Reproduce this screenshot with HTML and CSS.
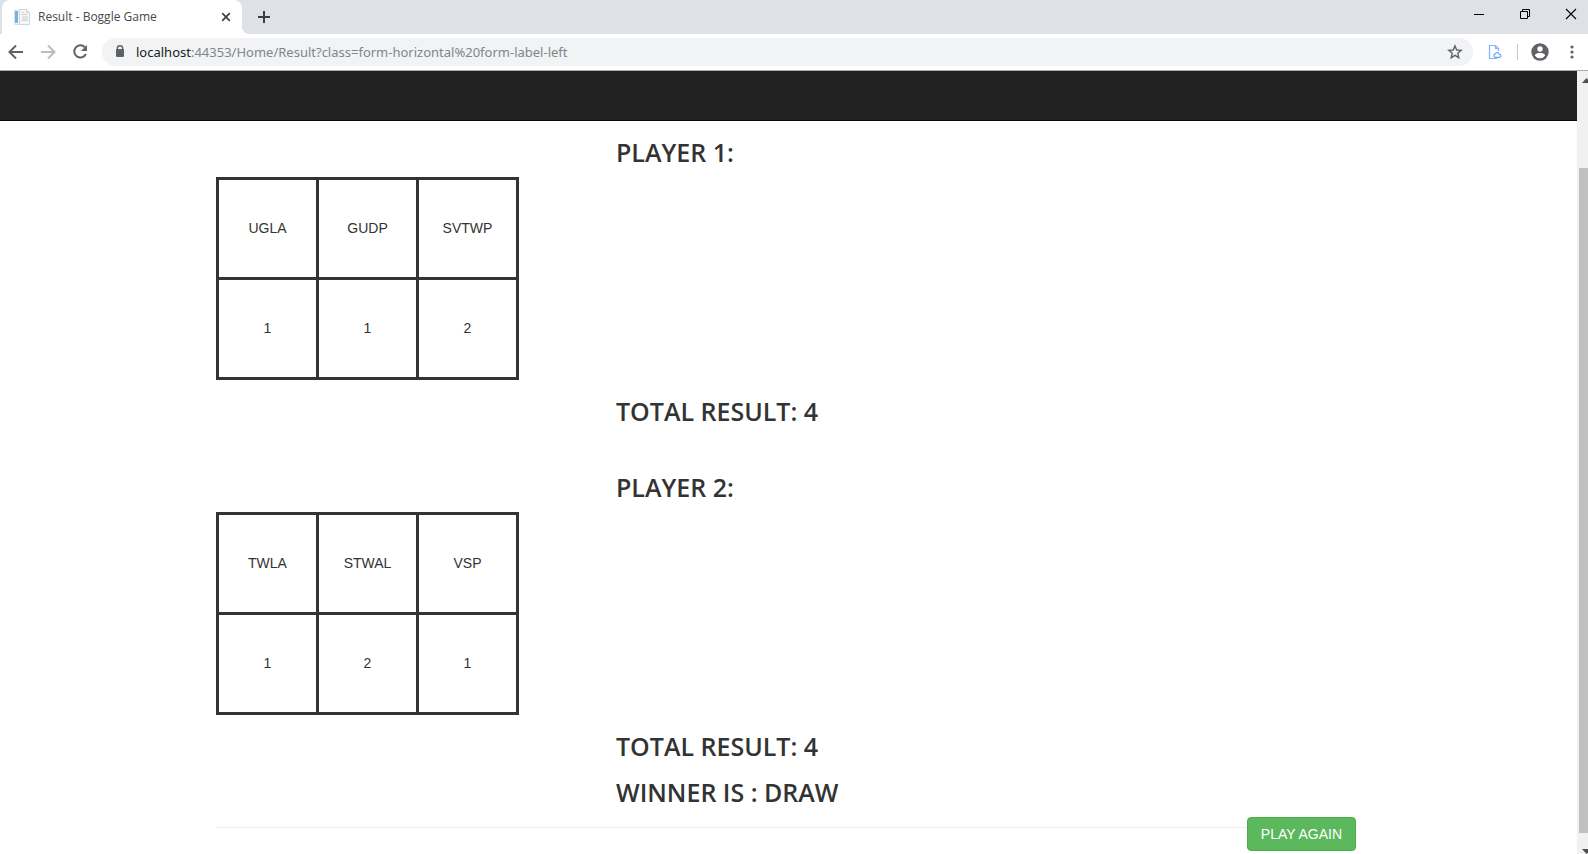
FILE: index.html
```html
<!DOCTYPE html>
<html lang="en">
<head>
<meta charset="utf-8">
<meta name="viewport" content="width=device-width, initial-scale=1">
<title>Result - Boggle Game</title>
<link rel="stylesheet" href="styles.css">
</head>
<body class="window">
<header class="browser">
  <div class="tabstrip">
    <div class="tab">
      <svg class="favicon" width="16" height="16" viewBox="0 0 16 16" aria-hidden="true">
        <path d="M0.5 1h10v14.500h-10z" fill="#f4f6f8" stroke="#dbe1e6"/>
        <path d="M1 2h3v12H1z" fill="#74b4dc"/>
        <path d="M5.500 0.500h7l3 3v12h-10z" fill="#f6f7f8" stroke="#d2d6da"/>
        <path d="M12.500 0.500v3h3M7.500 3.500h3M7.500 5.500h6M7.500 11.500h6" fill="none" stroke="#cfd4d9"/>
        <path d="M8 7h6v4H8z" fill="#dfe3e7"/>
      </svg>
      <span class="tab-title">Result - Boggle Game</span>
      <button class="tab-close" type="button" aria-label="Close tab">
        <svg width="16" height="16" viewBox="0 0 16 16"><path d="M4.200 4.200l7.600 7.600M11.800 4.200l-7.600 7.600" fill="none" stroke="#3c4043" stroke-width="1.700"/></svg>
      </button>
    </div>
    <button class="new-tab" type="button" aria-label="New tab">
      <svg width="16" height="16" viewBox="0 0 16 16"><path d="M8 2v12M2 8h12" fill="none" stroke="#3c4043" stroke-width="2"/></svg>
    </button>
    <div class="window-controls">
      <button class="window-button" type="button" aria-label="Minimize"><svg width="12" height="12" viewBox="0 0 12 12"><path d="M1 6.500h10" stroke="#000"/></svg></button>
      <button class="window-button" type="button" aria-label="Restore"><svg width="12" height="12" viewBox="0 0 12 12"><path d="M1.500 3.500h7v7h-7zM3.500 3V1.500h7v7H9" fill="none" stroke="#000"/></svg></button>
      <button class="window-button" type="button" aria-label="Close"><svg width="12" height="12" viewBox="0 0 12 12"><path d="M1 1l10 10M11 1L1 11" fill="none" stroke="#000" stroke-width="1.100"/></svg></button>
    </div>
  </div>
  <div class="toolbar">
    <button class="tool" type="button" aria-label="Back"><svg width="16" height="16" viewBox="0 0 16 16"><path d="M15 8H2.500M8 1.500L1.500 8L8 14.500" fill="none" stroke="#5f6368" stroke-width="2"/></svg></button>
    <button class="tool" type="button" aria-label="Forward"><svg width="16" height="16" viewBox="0 0 16 16"><path d="M1 8h12.500M8 1.500L14.500 8L8 14.500" fill="none" stroke="#babcbe" stroke-width="2"/></svg></button>
    <button class="tool" type="button" aria-label="Reload"><svg width="16" height="16" viewBox="0 0 16 16"><path d="M12.800 3.300A6.100 6.100 0 1 0 13.900 10" fill="none" stroke="#5f6368" stroke-width="2"/><path d="M15 1v6H9z" fill="#5f6368"/></svg></button>
    <div class="omnibox">
      <svg width="12" height="16" viewBox="0 0 12 16" aria-hidden="true"><path d="M3.300 7V4.500a2.700 2.700 0 0 1 5.400 0V7" fill="none" stroke="#5f6368" stroke-width="1.400"/><rect x="2" y="5" width="8" height="8" rx="1" fill="#5f6368"/></svg>
      <div class="address" role="textbox" contenteditable="true" spellcheck="false" aria-label="Address"><span class="host">localhost</span>:44353/Home/Result?class=form-horizontal%20form-label-left</div>
      <button class="star" type="button" aria-label="Bookmark this page"><svg width="16" height="16" viewBox="0 0 16 16"><path d="M8 1.900l1.700 4.100 4.500.4-3.400 2.900 1 4.400L8 11.400l-3.800 2.300 1-4.400-3.400-2.900 4.500-.4z" fill="none" stroke="#5f6368" stroke-width="1.400"/></svg></button>
    </div>
    <button class="extension" type="button" aria-label="Document extension"><svg width="14" height="16" viewBox="0 0 14 16"><path d="M9 14.500H1.500v-13H7.500l3 3V7M7.500 1.500v3h3" fill="none" stroke="#7db4fb" stroke-width="1.200"/><path d="M7 13.300a1.800 1.800 0 0 1 .2-3.400 2.200 2.200 0 0 1 4.100.2 1.700 1.700 0 0 1 .7 3.200z" fill="#fff" stroke="#66a6fa" stroke-width="1.200"/></svg></button>
    <span class="separator"></span>
    <button class="profile" type="button" aria-label="Profile"><svg width="18" height="18" viewBox="0 0 18 18"><circle cx="9" cy="9" r="8.700" fill="#5f6368"/><circle cx="9" cy="6" r="2.700" fill="#fff"/><path d="M3.800 12.400C4.200 10.600 7 10 9 10s4.800.6 5.200 2.400A6.200 6.200 0 0 1 9 15.200a6.200 6.200 0 0 1-5.200-2.800z" fill="#fff"/></svg></button>
    <button class="menu" type="button" aria-label="Menu"><svg width="4" height="14" viewBox="0 0 4 14"><circle cx="2" cy="2" r="1.600" fill="#5f6368"/><circle cx="2" cy="7" r="1.600" fill="#5f6368"/><circle cx="2" cy="12" r="1.600" fill="#5f6368"/></svg></button>
  </div>
</header>
<div class="viewport">
  <div class="page">
    <nav class="navbar" aria-label="Main"></nav>
    <main class="container">
      <section class="player">
        <h3 class="heading">PLAYER 1:</h3>
        <table class="words">
          <tr><td>UGLA</td><td>GUDP</td><td>SVTWP</td></tr>
          <tr><td>1</td><td>1</td><td>2</td></tr>
        </table>
        <h3 class="heading">TOTAL RESULT: 4</h3>
      </section>
      <section class="player">
        <h3 class="heading">PLAYER 2:</h3>
        <table class="words">
          <tr><td>TWLA</td><td>STWAL</td><td>VSP</td></tr>
          <tr><td>1</td><td>2</td><td>1</td></tr>
        </table>
        <h3 class="heading">TOTAL RESULT: 4</h3>
        <h3 class="heading">WINNER IS : DRAW</h3>
      </section>
      <div class="actions">
        <hr class="rule">
        <button class="play" type="button">PLAY AGAIN</button>
      </div>
    </main>
  </div>
  <div class="scrollbar" aria-hidden="true">
    <svg class="arrow" width="9" height="5" viewBox="0 0 9 5"><path d="M0 5L4.500 0L9 5z" fill="#505050"/></svg>
    <div class="track"><div class="thumb"></div></div>
    <svg class="arrow" width="9" height="5" viewBox="0 0 9 5"><path d="M0 0L4.500 5L9 0z" fill="#505050"/></svg>
  </div>
</div>
</body>
</html>
```

FILE: styles.css
```css
* {
  box-sizing: border-box;
}

.window {
  display: flex;
  flex-direction: column;
  min-height: 100vh;
  margin: 0;
  overflow: hidden;
  background: #fff;
  color: #333;
  font: 14px/20px "Liberation Sans", Arial, sans-serif;
}

button {
  display: flex;
  align-items: center;
  justify-content: center;
  padding: 0;
  border: 0;
  background: none;
}

svg {
  display: block;
  flex: none;
}

/* Browser chrome */
.browser {
  border-bottom: 1px solid #a9ada9;
  font-family: "Open Sans", "Noto Sans", sans-serif;
}

.tabstrip {
  display: flex;
  height: 34px;
  padding-left: 2px;
  background: #dee1e6;
}

.tab {
  position: relative;
  display: flex;
  align-items: center;
  gap: 8px;
  width: 240px;
  padding: 0 8px 0 12px;
  border-radius: 8px 8px 0 0;
  background: #fff;
}

.tab::after {
  content: "";
  position: absolute;
  bottom: 0;
  left: 100%;
  width: 8px;
  height: 8px;
  background: radial-gradient(circle at 100% 0, transparent 8px, #fff 8px);
}

.tab-title {
  flex: 1;
  color: #45494d;
  font-size: 12px;
  white-space: nowrap;
}

.new-tab {
  width: 28px;
  margin-left: 8px;
}

.window-controls {
  display: flex;
  height: 28px;
  margin-left: auto;
}

.window-button {
  width: 46px;
}

.window-button:last-child {
  width: 40px;
  padding-left: 6px;
}

.toolbar {
  display: flex;
  align-items: center;
  height: 36px;
  padding: 0 14px 0 0;
}

.tool {
  width: 32px;
  height: 32px;
}

.omnibox {
  display: flex;
  flex: 1;
  align-items: center;
  gap: 10px;
  height: 28px;
  margin-left: 6px;
  padding: 0 10px 0 12px;
  border-radius: 14px;
  background: #f1f3f4;
}

.address {
  flex: 1;
  color: #80868b;
  font-family: "Noto Sans", "Open Sans", sans-serif;
  font-size: 13px;
  white-space: nowrap;
}

.host {
  color: #202124;
}

.extension {
  margin-left: 15px;
}

.separator {
  width: 1px;
  height: 16px;
  margin: 0 13px 0 15px;
  background: #c6c8ca;
}

.menu {
  margin-left: 21px;
}

/* Web page */
.viewport {
  display: flex;
  flex: 1;
}

.page {
  flex: 1;
}

.navbar {
  height: 50px;
  border-bottom: 1px solid #080808;
  background: #222;
}

.container {
  max-width: 1145px;
  margin: 0 auto;
  padding-right: 5px;
}

.player {
  display: flow-root;
}

.player + .player {
  margin-top: 20px;
}

.heading {
  margin: 20px 0 14px 400px;
  font: 600 25px/22px "Open Sans", "Noto Sans", sans-serif;
  font-kerning: none;
}

.heading + .heading {
  margin-top: 24px;
}

.words {
  border-collapse: collapse;
}

.words td {
  width: 100px;
  height: 100px;
  padding: 0 0 2px;
  border: 3px solid #333;
  text-align: center;
}

.actions {
  display: flex;
  align-items: flex-start;
}

.rule {
  flex: 1;
  margin: 10px 0;
  border: 0;
  border-top: 1px solid #eee;
}

.play {
  padding: 6px 13px;
  border: 1px solid #4cae4c;
  border-radius: 4px;
  background: #5cb85c;
  color: #fff;
  font: 14px/20px "Liberation Sans", Arial, sans-serif;
}

.scrollbar {
  display: flex;
  flex-direction: column;
  width: 11px;
  padding: 7px 0 0 2px;
  overflow: hidden;
  background: #f1f1f1;
}

.arrow {
  margin-left: 3px;
}

.track {
  flex: 1;
  padding: 85px 0 16px;
}

.thumb {
  height: 100%;
  background: #c1c1c1;
}
```
